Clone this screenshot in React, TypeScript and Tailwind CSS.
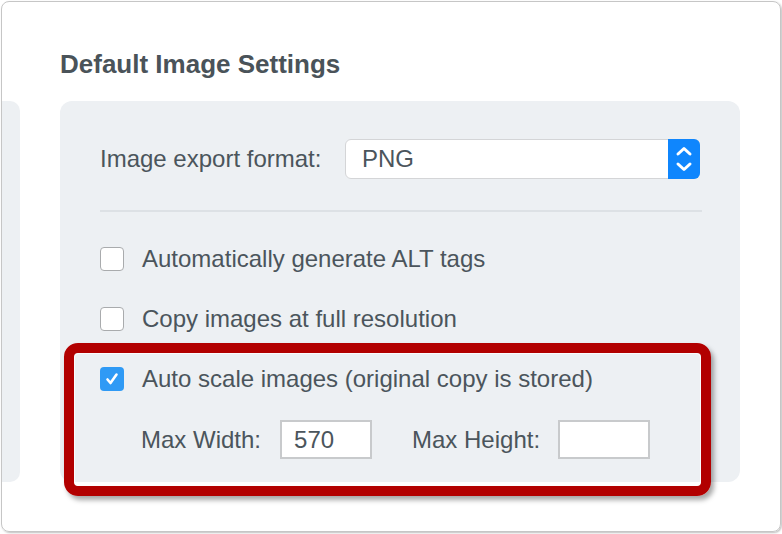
import React from "react";

const textColor = "text-[#4b555c]";

const Checkbox = ({ checked }: { checked?: boolean }) =>
  checked ? (
    <div className="flex h-[24px] w-[24px] shrink-0 items-center justify-center rounded-[4px] bg-[#2f9af5]">
      <svg width="24" height="24" viewBox="0 0 24 24">
        <path d="M7.5 12.5 L10.5 16 L16.5 7.5" fill="none" stroke="white" strokeWidth="2.6" strokeLinecap="round" strokeLinejoin="round" />
      </svg>
    </div>
  ) : (
    <div className="h-[24px] w-[24px] shrink-0 rounded-[4px] border-[1.5px] border-[#a9abad] bg-white" />
  );

const CheckRow = ({ label, checked }: { label: string; checked?: boolean }) => (
  <div className="flex h-[60px] items-center gap-[18px]">
    <Checkbox checked={checked} />
    <span className={`text-[24px] leading-[28px] ${textColor}`}>{label}</span>
  </div>
);

const SizeInput = ({ value }: { value?: string }) => (
  <div className="flex h-[39px] w-[92px] items-center border-2 border-[#c8cacc] bg-white pl-[12px] text-[24px] leading-[28px] text-[#4b555c]">
    {value}
  </div>
);

export default function App() {
  return (
    <div
      className="relative h-[534px] w-[782px] overflow-hidden bg-white"
      style={{ fontFamily: '"Liberation Sans", Arial, sans-serif' }}
    >
      <div className="ml-[1px] mt-[1px] flex h-[531px] w-[780px] rounded-[8px] border border-[#c6c6c6] shadow-[1px_1px_2px_rgba(0,0,0,0.25)]">
        {/* left neighbour panel, cut off */}
        <div className="mt-[99px] h-[381px] w-[18px] rounded-r-[10px] bg-[#edf0f3]" />

        <div className="ml-[40px] w-[680px]">
          <h2 className="mt-[47px] text-[26px] font-bold leading-[30px] text-[#4a5359]">
            Default Image Settings
          </h2>

          <div className="mt-[22px] h-[381px] rounded-[12px] bg-[#edf0f3] pl-[40px] pr-[40px] pt-[38px]">
            <div className="flex items-center justify-between">
              <span className={`text-[24px] leading-[28px] ${textColor}`}>Image export format:</span>
              <div className="flex h-[40px] w-[355px] items-stretch rounded-[6px] border border-[#d4d5d7] bg-white">
                <div className="flex flex-1 items-center pl-[16px] text-[24px] leading-[28px] text-[#4b555c]">PNG</div>
                <div className="-my-px -mr-px flex w-[32px] items-center justify-center rounded-r-[6px] bg-[#0f86fd]">
                  <svg width="32" height="40" viewBox="0 0 32 40">
                    <path d="M10 15 L16 9.5 L22 15" fill="none" stroke="white" strokeWidth="3" strokeLinecap="round" strokeLinejoin="round" />
                    <path d="M10 25 L16 30.5 L22 25" fill="none" stroke="white" strokeWidth="3" strokeLinecap="round" strokeLinejoin="round" />
                  </svg>
                </div>
              </div>
            </div>

            <div className="-mr-[2px] mt-[31px] h-[2px] bg-[#dde1e5]" />

            <div className="mt-[17px]">
              <CheckRow label="Automatically generate ALT tags" />
              <CheckRow label="Copy images at full resolution" />
              <CheckRow label="Auto scale images (original copy is stored)" checked />
            </div>

            <div className="ml-[41px] mt-[11px] flex items-center">
              <span className={`text-[24px] leading-[28px] ${textColor}`}>Max Width:</span>
              <div className="ml-[19px]">
                <SizeInput value="570" />
              </div>
              <span className={`ml-[40px] text-[24px] leading-[28px] ${textColor}`}>Max Height:</span>
              <div className="ml-[18px]">
                <SizeInput />
              </div>
            </div>
          </div>
        </div>
      </div>

      {/* red annotation box */}
      <div className="absolute left-[64px] top-[343px] h-[153px] w-[647px] rounded-[14px] border-[10px] border-[#b20000] shadow-[3px_4px_5px_rgba(0,0,0,0.35)]">
        <div className="h-full w-full rounded-[5px] border border-white/80" />
      </div>
    </div>
  );
}
